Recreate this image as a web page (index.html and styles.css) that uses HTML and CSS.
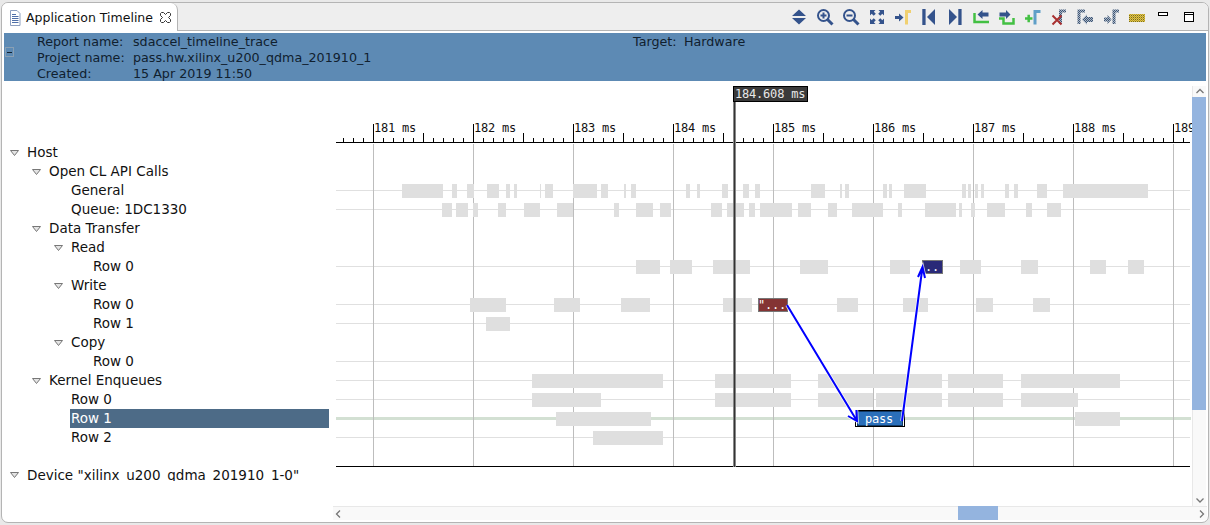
FILE: index.html
```html
<!DOCTYPE html>
<html lang="en">
<head>
<meta charset="utf-8">
<title>Application Timeline</title>
<link rel="stylesheet" href="styles.css">
</head>
<body>
<div class="frame">
  <div class="tabbar">
    <div class="tab">
      <svg class="tab-icon" width="12" height="16" viewBox="0 0 12 16"><path class="doc" d="M1.5 .5H8L11 3.5V15.5H1.5Z"/><path class="doc-lines" d="M3 4.5H7M3 6.5H9.500M3 8.500H9.500M3 10.500H9.500M3 12.500H9.500"/></svg>
      <span class="tab-title">Application Timeline</span>
      <svg class="tab-close" width="11" height="11" viewBox="0 0 11 11"><path d="M1.500 .5H3.500L5.500 2.500L7.500 .5H9.500L10.500 1.500V3.500L8.500 5.500L10.500 7.500V9.500L9.500 10.500H7.500L5.500 8.500L3.500 10.500H1.500L.5 9.500V7.500L2.500 5.500L.5 3.500V1.500Z"/></svg>
    </div>
    <div class="toolbar">
      <svg class="ti" viewBox="0 0 16 16"><path class="navy" d="M8 .5L15 7H1ZM1 9H15L8 15.500Z"/></svg>
      <svg class="ti" viewBox="0 0 16 16"><circle class="lens" cx="6.500" cy="6.500" r="5.500"/><path class="lens thick" d="M10.500 10.500L15.500 15.500"/><path class="lens" d="M3.500 6.500H9.500M6.500 3.500V9.500"/></svg>
      <svg class="ti" viewBox="0 0 16 16"><circle class="lens" cx="6.500" cy="6.500" r="5.500"/><path class="lens thick" d="M10.500 10.500L15.500 15.500"/><path class="lens" d="M3.500 6.500H9.500"/></svg>
      <svg class="ti" viewBox="0 0 16 16"><path class="navy" d="M1 1H6.500L4.800 2.700L6.800 4.700L4.700 6.800L2.700 4.800L1 6.500ZM15 1V6.500L13.300 4.800L11.300 6.800L9.200 4.700L11.200 2.700L9.500 1ZM1 15V9.500L2.700 11.200L4.700 9.200L6.800 11.300L4.800 13.300L6.500 15ZM15 15H9.500L11.200 13.300L9.200 11.300L11.300 9.200L13.300 11.200L15 9.500Z"/></svg>
      <svg class="ti" viewBox="0 0 16 16"><path class="navy" d="M0 7H4V4.500L8.500 8.500L4 12.500V10H0Z"/><path class="gold" d="M11.500 15.500V2.500H16"/></svg>
      <svg class="ti" viewBox="0 0 16 16"><path class="navy" d="M1.300 0H4.600V16H1.300ZM14 0V16L6 8Z"/></svg>
      <svg class="ti" viewBox="0 0 16 16"><path class="navy" d="M11.300 0H14.600V16H11.300ZM2 0V16L10 8Z"/></svg>
      <svg class="ti" viewBox="0 0 16 16"><path class="navy" d="M4.500 5.500L9.500 1V3.500H15.500V7.500H9.500V10Z"/><path class="green" d="M1.500 4V13H16"/></svg>
      <svg class="ti" viewBox="0 0 16 16"><path class="navy" d="M.5 3.500H7V1L11.500 5.500L7 10V7.500H.5Z"/><path class="green" d="M0 9.500H4.500V14.500H14.500V9"/></svg>
      <svg class="ti" viewBox="0 0 16 16"><path class="green" d="M0 9.500H7.500M3.700 5.700V13.300"/><path class="teal" d="M10 15.500V2.500H15.500"/></svg>
      <svg class="ti" viewBox="0 0 16 16"><path class="dither" d="M9.500 15V2H15"/><path class="red" d="M1.500 6.500L10.500 15.500M10.500 6.500L1.500 15.500"/></svg>
      <svg class="ti" viewBox="0 0 16 16"><defs><pattern id="dith" width="2" height="2" patternUnits="userSpaceOnUse"><rect width="2" height="2" fill="#a9b6c8"/><rect width="1" height="1" fill="#3f5572"/><rect x="1" y="1" width="1" height="1" fill="#3f5572"/></pattern></defs><path class="dither" d="M2 15V2H8"/><path class="dith-shape" d="M5 10.500L10 5.500V8H16V13H10V15.500Z"/></svg>
      <svg class="ti" viewBox="0 0 16 16"><path class="dith-shape" d="M1 8.500H4.500V6L8.500 10.500L4.500 15V12.500H1Z"/><path class="dither" d="M11 15V2H16"/></svg>
      <svg class="ti" viewBox="0 0 16 16"><defs><pattern id="goldcheck" width="2" height="2" patternUnits="userSpaceOnUse"><rect width="2" height="2" fill="#e0c84a"/><rect width="1" height="1" fill="#7a6a22"/><rect x="1" y="1" width="1" height="1" fill="#b8982c"/></pattern></defs><rect class="ruler" width="16" height="8" y="5"/></svg>
      <svg class="ti" viewBox="0 0 16 16"><rect class="winbtn" x="3.500" y="3.500" width="9" height="3"/></svg>
      <svg class="ti" viewBox="0 0 16 16"><rect class="winbtn" x="3.500" y="3.500" width="9" height="9"/><path class="winbar" d="M3.500 5.500H12.500"/></svg>
    </div>
  </div>

  <div class="report">
    <div class="collapse"><span class="collapse-dash"></span></div>
    <div class="report-grid">
      <span>Report name:</span><span>sdaccel_timeline_trace</span><span>Target:</span><span>Hardware</span>
      <span>Project name:</span><span>pass.hw.xilinx_u200_qdma_201910_1</span><span></span><span></span>
      <span>Created:</span><span>15 Apr 2019 11:50</span><span></span><span></span>
    </div>
  </div>

  <div class="main">
    <div class="tree">
      <div class="row d0"><svg class="tw" viewBox="0 0 9 6"><path d="M.5 .5H8.500L4.500 5.500Z"/></svg><span class="label">Host</span></div>
      <div class="row d1"><svg class="tw" viewBox="0 0 9 6"><path d="M.5 .5H8.500L4.500 5.500Z"/></svg><span class="label">Open CL API Calls</span></div>
      <div class="row d2"><span class="leaf"></span><span class="label">General</span></div>
      <div class="row d2"><span class="leaf"></span><span class="label">Queue: 1DC1330</span></div>
      <div class="row d1"><svg class="tw" viewBox="0 0 9 6"><path d="M.5 .5H8.500L4.500 5.500Z"/></svg><span class="label">Data Transfer</span></div>
      <div class="row d2"><svg class="tw" viewBox="0 0 9 6"><path d="M.5 .5H8.500L4.500 5.500Z"/></svg><span class="label">Read</span></div>
      <div class="row d3"><span class="leaf"></span><span class="label">Row 0</span></div>
      <div class="row d2"><svg class="tw" viewBox="0 0 9 6"><path d="M.5 .5H8.500L4.500 5.500Z"/></svg><span class="label">Write</span></div>
      <div class="row d3"><span class="leaf"></span><span class="label">Row 0</span></div>
      <div class="row d3"><span class="leaf"></span><span class="label">Row 1</span></div>
      <div class="row d2"><svg class="tw" viewBox="0 0 9 6"><path d="M.5 .5H8.500L4.500 5.500Z"/></svg><span class="label">Copy</span></div>
      <div class="row d3"><span class="leaf"></span><span class="label">Row 0</span></div>
      <div class="row d1"><svg class="tw" viewBox="0 0 9 6"><path d="M.5 .5H8.500L4.500 5.500Z"/></svg><span class="label">Kernel Enqueues</span></div>
      <div class="row d2"><span class="leaf"></span><span class="label">Row 0</span></div>
      <div class="row d2"><span class="leaf"></span><span class="label selected">Row 1</span></div>
      <div class="row d2"><span class="leaf"></span><span class="label">Row 2</span></div>
      <div class="row"></div>
      <div class="row d0 clipped"><svg class="tw" viewBox="0 0 9 6"><path d="M.5 .5H8.500L4.500 5.500Z"/></svg><span class="label">Device "xilinx_u200_qdma_201910_1-0"</span></div>
    </div>

    <div class="viewport">
      <div class="view-top">
        <svg class="chart" width="859" height="424" viewBox="333 82 859 424">
          <path class="rowline" d="M336 190.500H1190M336 209.500H1190M336 266.500H1190M336 304.500H1190M336 323.500H1190M336 361.500H1190M336 380.500H1190M336 399.500H1190M336 437.500H1190"/>
          <path class="selline" d="M336 418.500H1191"/>
          <path class="grid" d="M373 305H1190"/>
          <path class="axis" d="M336 142.500H1190M336 466.500H1190"/>
          <path class="tick-minor" d="M343 140H1190"/>
          <path class="tick-mid" d="M423 137.500H1190"/>
          <path class="tick-major" d="M373 133H1190"/>
          <g class="scale">
            <text x="374" y="132">181 ms</text><text x="474" y="132">182 ms</text><text x="574" y="132">183 ms</text><text x="674" y="132">184 ms</text><text x="774" y="132">185 ms</text><text x="874" y="132">186 ms</text><text x="974" y="132">187 ms</text><text x="1074" y="132">188 ms</text><text x="1174" y="132">189 ms</text>
          </g>
          <path class="bars" d="M402 191H443M452 191H457M467 191H474M487 191H499M506 191H510M514 191H517M540 191H541M545 191H553M573 191H597M601 191H608M624 191H626M631 191H636M686 191H690M697 191H700M722 191H728M743 191H749M755 191H760M811 191H825M840 191H842M845 191H849M883 191H887M889 191H892M904 191H926M962 191H966M968 191H971M975 191H978M981 191H984M1005 191H1009M1014 191H1018M1037 191H1047M1063 191H1148"/>
          <path class="bars" d="M442 210H452M456 210H468M473 210H478M498 210H506M524 210H540M557 210H573M614 210H619M636 210H653M660 210H671M711 210H722M727 210H744M749 210H755M760 210H792M798 210H811M828 210H837M852 210H883M898 210H902M925 210H956M959 210H962M971 210H975M987 210H1005M1026 210H1032M1047 210H1061"/>
          <path class="bars" d="M636 267H660M670 267H692M713 267H750M800 267H828M890 267H910M960 267H981M1021 267H1038M1090 267H1106M1128 267H1144"/>
          <path class="bars" d="M470 305H506M554 305H580M621 305H650M723 305H752M837 305H858M903 305H928M976 305H993M1033 305H1050"/>
          <path class="bars" d="M486 324H510"/>
          <path class="bars" d="M532 381H663M715 381H791M818 381H942M948 381H1003M1021 381H1120"/>
          <path class="bars" d="M532 400H601M715 400H791M818 400H873M876 400H942M948 400H1003M1021 400H1078"/>
          <path class="bars" d="M556 419H651M1075 419H1120"/>
          <path class="bars" d="M593 438H663"/>
          <rect class="event red-event" x="758.500" y="298.500" width="29" height="13"/>
          <text class="event-text" x="758" y="309">"...</text>
          <rect class="event navy-event" x="922.500" y="260.500" width="20" height="13"/>
          <text class="event-text" x="925" y="271">..</text>
          <rect class="pass-outer" x="855.500" y="410.500" width="49" height="16"/>
          <rect class="pass-inner" x="857.500" y="411.500" width="45" height="14"/>
          <text class="event-text pass-text" x="879" y="423">pass</text>
          <path class="cursor-soft" d="M734.500 102V467"/>
          <path class="cursor-core" d="M734.500 102V467"/>
          <rect class="cursor-box" x="733.500" y="86.500" width="74" height="15"/>
          <text class="cursor-text" x="735" y="98">184.608 ms</text>
          <path class="arrow-halo" d="M787 305L857 421M848 416L857 421L856.500 410M902 421L922.500 267M918 277L922.500 267L925 278"/>
          <path class="arrow" d="M787 305L857 421M848 416L857 421L856.500 410M902 421L922.500 267M918 277L922.500 267L925 278"/>
        </svg>
        <div class="vscroll">
          <svg class="chev" width="14" height="11" viewBox="0 0 14 11"><path d="M3.500 7L7 3.500L10.500 7"/></svg>
          <div class="vthumb"></div>
          <div class="vspace"></div>
          <svg class="chev" width="14" height="11" viewBox="0 0 14 11"><path d="M3.500 3.500L7 7L10.500 3.500"/></svg>
        </div>
      </div>
      <div class="hscroll">
        <svg class="chev" width="11" height="14" viewBox="0 0 11 14"><path d="M7 3.500L3.500 7L7 10.500"/></svg>
        <div class="hspace-a"></div>
        <div class="hthumb"></div>
        <div class="hspace-b"></div>
        <svg class="chev" width="11" height="14" viewBox="0 0 11 14"><path d="M4 3.500L7.500 7L4 10.500"/></svg>
      </div>
    </div>
  </div>
</div>
</body>
</html>
```

FILE: styles.css
```css
* { box-sizing: border-box; }
html, body { margin: 0; height: 525px; overflow: hidden; }
body {
  background: #e9e9e9;
  font-family: "DejaVu Sans", sans-serif;
  color: #111;
  padding: 2px 1px 2px 1px;
}
.frame {
  height: 521px;
  border: 1px solid #b4b4b4;
  border-radius: 7px;
  background: #fff;
  display: flex;
  flex-direction: column;
  overflow: hidden;
}
.tabbar {
  flex: none;
  height: 28px;
  background: #eeeeee;
  border-bottom: 1px solid #b4b4b4;
  display: flex;
  align-items: flex-start;
}
.tab {
  width: 176px;
  height: 28px;
  background: #fff;
  border-right: 1px solid #b4b4b4;
  border-top-right-radius: 7px;
  border-top-left-radius: 6px;
  display: flex;
  align-items: center;
  padding: 1px 0 0 7px;
}
.tab-icon { flex: none; margin-right: 5px; }
.doc { fill: #fff; stroke: #8d9fc0; }
.doc-lines { stroke: #4f6fa8; fill: none; }
.tab-title { font-size: 12.500px; width: 134px; white-space: nowrap; }
.tab-close { flex: none; }
.tab-close path { fill: #fff; stroke: #333; }
.toolbar {
  margin-left: auto;
  margin-right: 11px;
  height: 27px;
  display: flex;
  align-items: center;
  gap: 10px;
  padding-top: 1px;
}
.ti { width: 16px; height: 16px; flex: none; overflow: visible; }
.navy { fill: #34538c; }
.lens { fill: none; stroke: #34538c; stroke-width: 2; }
.thick { stroke-width: 3; }
.gold { fill: none; stroke: #f0d070; stroke-width: 3; }
.green { fill: none; stroke: #43c043; stroke-width: 2.500; }
.teal { fill: none; stroke: #5f9fc8; stroke-width: 3; }
.red { fill: none; stroke: #a83030; stroke-width: 2; }
.dither { fill: none; stroke: url(#dith); stroke-width: 3; }
.dith-shape { fill: url(#dith); }
.ruler { fill: url(#goldcheck); }
.winbtn { fill: #fff; stroke: #000; }
.winbar { fill: none; stroke: #000; }

.report {
  flex: none;
  margin: 2px 2px 1px;
  height: 48px;
  padding-top: 2px;
  background: #5d8ab4;
  display: flex;
  align-items: center;
  color: #10202e;
  font-size: 12.700px;
  line-height: 16px;
}
.collapse {
  flex: none;
  align-self: flex-start;
  width: 9px;
  height: 10px;
  margin: 12px 0 0 1px;
  border: 1px solid #8aa0b4;
  display: flex;
  align-items: center;
  justify-content: center;
}
.collapse-dash { width: 5px; height: 1px; background: #10202e; }
.report-grid {
  margin-left: 23px;
  display: grid;
  grid-template-columns: 96px 500px 51px 1fr;
  white-space: nowrap;
}

.main { flex: 1; display: flex; min-height: 0; }
.tree {
  flex: none;
  width: 331px;
  padding-top: 61px;
  font-size: 13.500px;
  line-height: 19px;
}
.row {
  height: 19px;
  display: flex;
  align-items: center;
  margin-right: 4px;
  white-space: nowrap;
}
.d0 { padding-left: 6px; }
.d1 { padding-left: 28px; }
.d2 { padding-left: 50px; }
.d3 { padding-left: 72px; }
.tw { flex: none; width: 9px; height: 6px; margin: 0 7px 0 2px; }
.tw path { fill: #e4e4e4; stroke: #777; }
.leaf { flex: none; width: 18px; }
.label { padding-left: 1px; height: 19px; }
.selected { flex: 1; background: #4d6b87; color: #fff; }
.clipped { height: 15px; overflow: hidden; align-items: flex-start; }
.clipped .tw { margin-top: 6px; }

.viewport { flex: 1; min-width: 0; display: flex; flex-direction: column; }
.view-top { flex: none; height: 424px; display: flex; }
.chart { flex: none; display: block; }
.rowline { stroke: #e0e0e0; fill: none; shape-rendering: crispEdges; }
.selline { stroke: #d3e0d3; stroke-width: 3; fill: none; shape-rendering: crispEdges; }
.grid { stroke: #bdbdbd; stroke-width: 323; stroke-dasharray: 1 99; fill: none; shape-rendering: crispEdges; }
.axis { stroke: #000; fill: none; shape-rendering: crispEdges; }
.tick-minor { stroke: #000; stroke-width: 4; stroke-dasharray: 1 9; shape-rendering: crispEdges; }
.tick-mid { stroke: #000; stroke-width: 9; stroke-dasharray: 1 99; shape-rendering: crispEdges; }
.tick-major { stroke: #000; stroke-width: 18; stroke-dasharray: 1 99; shape-rendering: crispEdges; }
.scale text, .event-text, .cursor-text {
  font-family: "DejaVu Sans Mono", monospace;
  font-size: 12px;
  letter-spacing: -.2px;
}
.scale text { fill: #111; }
.bars { stroke: #dfdfdf; stroke-width: 14; fill: none; shape-rendering: crispEdges; }
.event { stroke: #777; stroke-width: 1; shape-rendering: crispEdges; }
.red-event { fill: #843434; }
.navy-event { fill: #2a2a78; }
.event-text { fill: #fff; }
.pass-outer { fill: #fff; stroke: #000; shape-rendering: crispEdges; }
.pass-inner { fill: #2a6fba; stroke: #123a66; shape-rendering: crispEdges; }
.pass-text { text-anchor: middle; }
.cursor-soft { stroke: #888; stroke-width: 3; fill: none; shape-rendering: crispEdges; }
.cursor-core { stroke: #333; stroke-width: 1; fill: none; shape-rendering: crispEdges; }
.cursor-box { fill: #3a3a3a; stroke: #000; shape-rendering: crispEdges; }
.cursor-text { fill: #e8e8e8; }
.arrow-halo { stroke: #fff; stroke-width: 3.500; fill: none; opacity: .8; }
.arrow { stroke: #0000ff; stroke-width: 2; fill: none; }

.chev { flex: none; display: block; }
.chev path { fill: none; stroke: #777; stroke-width: 1.300; }
.vscroll {
  flex: none;
  width: 14px;
  margin-top: 4px;
  background: #f9f9f9;
  border-left: 1px solid #e8e8e8;
  display: flex;
  flex-direction: column;
}
.vthumb { flex: none; height: 313px; background: #94b4df; margin-left: -1px; }
.vspace { flex: 1; }
.hscroll {
  flex: none;
  height: 14px;
  background: #f9f9f9;
  border-top: 1px solid #e8e8e8;
  display: flex;
  margin-right: 1px;
}
.hspace-a { flex: none; width: 614px; }
.hthumb { flex: none; width: 40px; background: #94b4df; margin-top: -1px; }
.hspace-b { flex: 1; }
```
